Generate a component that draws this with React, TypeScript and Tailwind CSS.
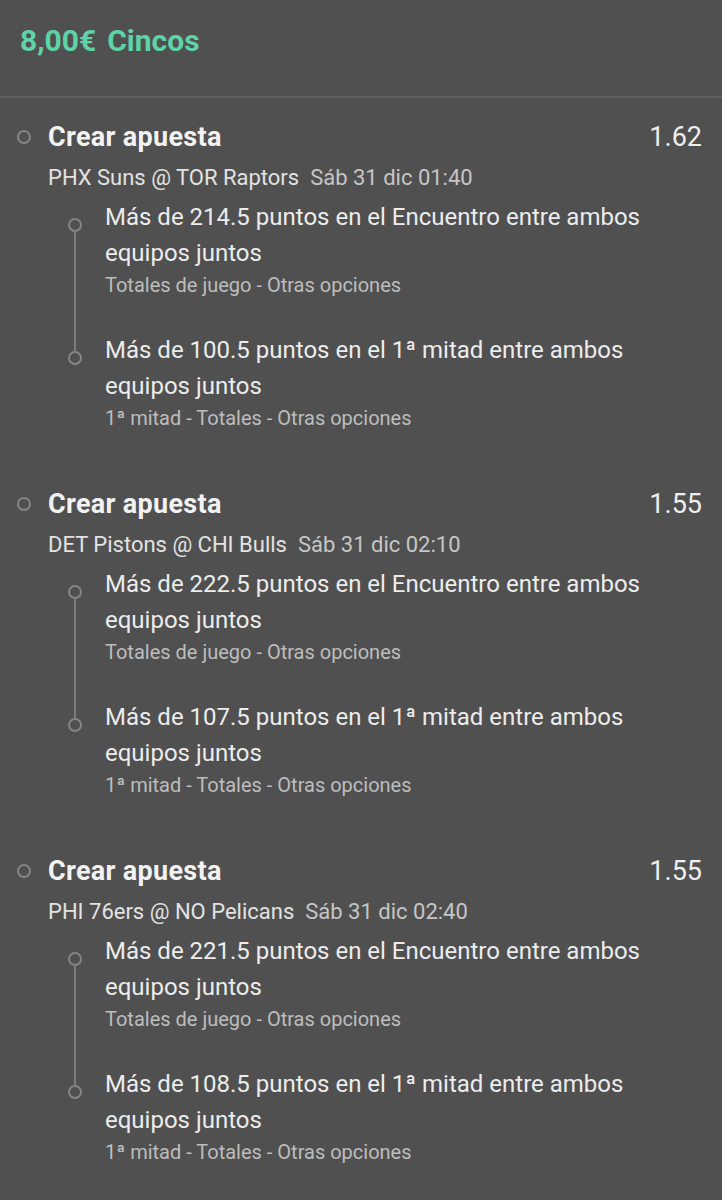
import React from "react";

type Sel = { text: string; sub: string };
type Block = { odds: string; teams: string; date: string; sels: Sel[] };

const blocks: Block[] = [
  {
    odds: "1.62",
    teams: "PHX Suns @ TOR Raptors",
    date: "Sáb 31 dic 01:40",
    sels: [
      { text: "Más de 214.5 puntos en el Encuentro entre ambos equipos juntos", sub: "Totales de juego - Otras opciones" },
      { text: "Más de 100.5 puntos en el 1ª mitad entre ambos equipos juntos", sub: "1ª mitad - Totales - Otras opciones" },
    ],
  },
  {
    odds: "1.55",
    teams: "DET Pistons @ CHI Bulls",
    date: "Sáb 31 dic 02:10",
    sels: [
      { text: "Más de 222.5 puntos en el Encuentro entre ambos equipos juntos", sub: "Totales de juego - Otras opciones" },
      { text: "Más de 107.5 puntos en el 1ª mitad entre ambos equipos juntos", sub: "1ª mitad - Totales - Otras opciones" },
    ],
  },
  {
    odds: "1.55",
    teams: "PHI 76ers @ NO Pelicans",
    date: "Sáb 31 dic 02:40",
    sels: [
      { text: "Más de 221.5 puntos en el Encuentro entre ambos equipos juntos", sub: "Totales de juego - Otras opciones" },
      { text: "Más de 108.5 puntos en el 1ª mitad entre ambos equipos juntos", sub: "1ª mitad - Totales - Otras opciones" },
    ],
  },
];

function BetBlock({ b }: { b: Block }) {
  return (
    <div className="pt-[21px] pb-[35px]">
      <div className="flex items-start">
        <div className="w-[48px] flex justify-center pt-[11px] shrink-0">
          <div className="w-[14px] h-[14px] rounded-full border-[2px] border-[#858585]" />
        </div>
        <div className="flex-1 text-[27px] leading-[36px] font-bold tracking-[0.3px] text-[#f2f2f2]">Crear apuesta</div>
        <div className="pr-[20px] text-[27px] leading-[36px] text-[#eeeeee]">{b.odds}</div>
      </div>
      <div className="ml-[48px] mt-[9px] text-[22px] leading-[28px] flex gap-[11px]">
        <span className="text-[#e2e2e2]">{b.teams}</span>
        <span className="text-[#c6c6c6]">{b.date}</span>
      </div>
      <div className="mt-[7px]">
        {b.sels.map((s, i) => {
          const first = i === 0;
          const last = i === b.sels.length - 1;
          return (
            <div key={i} className="flex">
              <div className="w-[105px] shrink-0 flex flex-col pl-[68px]">
                <div className={`ml-[6px] w-[2px] h-[19px] ${first ? "bg-transparent" : "bg-[#7d7d7d]"}`} />
                <div className="w-[14px] h-[14px] rounded-full border-[2px] border-[#858585] shrink-0" />
                <div className={`ml-[6px] w-[2px] flex-1 ${last ? "bg-transparent" : "bg-[#7d7d7d]"}`} />
              </div>
              <div className={`flex-1 pr-[20px] ${last ? "" : "pb-[35px]"}`}>
                <div className="text-[24px] leading-[36px] text-[#ececec]">{s.text}</div>
                <div className="mt-[2px] text-[20px] leading-[24px] text-[#bdbdbd]">{s.sub}</div>
              </div>
            </div>
          );
        })}
      </div>
    </div>
  );
}

export default function App() {
  return (
    <div className="w-[722px] min-h-[1200px] bg-[#505050]" style={{ fontFamily: "Roboto, 'Noto Sans', sans-serif" }}>
      <div className="h-[98px] flex items-center pl-[20px] border-b-[2px] border-[#5f5f5f]">
        <div className="flex gap-[11px] text-[30px] leading-[36px] font-bold text-[#5dd3a7] -mt-[14px]">
          <span>8,00€</span>
          <span>Cincos</span>
        </div>
      </div>
      {blocks.map((b, i) => (
        <BetBlock key={i} b={b} />
      ))}
    </div>
  );
}
